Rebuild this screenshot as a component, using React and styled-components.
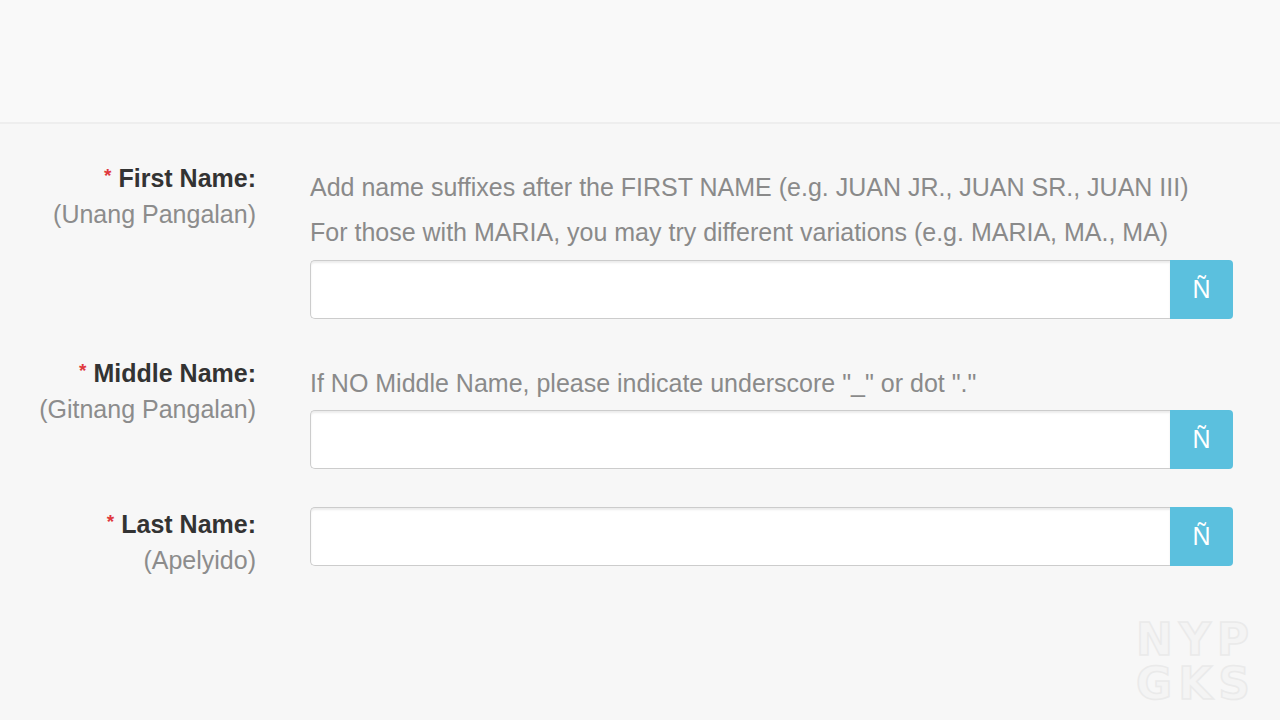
import React from "react";
import styled, { createGlobalStyle } from "styled-components";

const Global = createGlobalStyle`
  html, body { margin: 0; padding: 0; }
  body {
    background: #f7f7f7;
    font-family: "Liberation Sans", Arial, sans-serif;
    width: 1280px;
    height: 720px;
    overflow: hidden;
  }
`;

const Page = styled.div`
  position: relative;
  width: 1280px;
  height: 720px;
  background: #f7f7f7;
`;

const TopBar = styled.div`
  height: 122px;
  background: #f9f9f9;
  border-bottom: 2px solid #eeeeee;
`;

const Form = styled.div`
  display: flex;
  flex-direction: column;
  padding-top: 34px;
`;

const Row = styled.div`
  display: grid;
  grid-template-columns: 256px 923px;
  column-gap: 54px;
  margin-bottom: ${(p) => p.$gap || 0}px;
`;

const LabelCol = styled.div`
  text-align: right;
  line-height: 36px;
  font-size: 25px;
`;

const Star = styled.span`
  color: #e0393e;
  font-size: 19px;
  vertical-align: 5px;
  margin-right: 7px;
`;

const LabelMain = styled.div`
  color: #333;
  font-weight: bold;
`;

const LabelSub = styled.div`
  color: #8c8c8c;
`;

const FieldCol = styled.div`
  display: flex;
  flex-direction: column;
  padding-top: ${(p) => p.$top || 0}px;
`;

const Help = styled.div`
  color: #8a8a8a;
  font-size: 25px;
  line-height: 45px;
  white-space: nowrap;
`;

const InputGroup = styled.div`
  display: flex;
  height: 59px;
  margin-top: ${(p) => p.$top || 0}px;
`;

const TextInput = styled.input`
  flex: 1;
  box-sizing: border-box;
  height: 100%;
  border: 1px solid #cccccc;
  border-right: none;
  border-radius: 5px 0 0 5px;
  background: #fff;
  box-shadow: inset 0 2px 2px rgba(0, 0, 0, 0.075);
  outline: none;
  font-family: inherit;
  font-size: 25px;
  padding: 0 18px;
`;

const EnyeButton = styled.button`
  width: 63px;
  height: 100%;
  border: none;
  border-radius: 0 4px 4px 0;
  background: #5bc0de;
  color: #fff;
  font-family: "Liberation Sans", Arial, sans-serif;
  font-size: 25px;
  padding: 0;
`;

const Watermark = styled.div`
  position: absolute;
  right: 24px;
  bottom: 14px;
  white-space: pre-line;
  font-family: "DejaVu Sans", sans-serif;
  font-weight: bold;
  font-size: 44px;
  line-height: 44px;
  letter-spacing: 6px;
  color: #f4f4f4;
  -webkit-text-stroke: 1.5px #eaeaea;
`;

function Field({ helps, label, sub, fieldTop, inputTop, gap }) {
  return (
    <Row $gap={gap}>
      <LabelCol>
        <LabelMain>
          <Star>*</Star>
          {label}
        </LabelMain>
        <LabelSub>{sub}</LabelSub>
      </LabelCol>
      <FieldCol $top={fieldTop}>
        {helps.map((h) => (
          <Help key={h}>{h}</Help>
        ))}
        <InputGroup $top={inputTop}>
          <TextInput type="text" />
          <EnyeButton type="button">Ñ</EnyeButton>
        </InputGroup>
      </FieldCol>
    </Row>
  );
}

export default function App() {
  return (
    <Page>
      <Global />
      <TopBar />
      <Form>
        <Field
          label="First Name:"
          sub="(Unang Pangalan)"
          helps={[
            "Add name suffixes after the FIRST NAME (e.g. JUAN JR., JUAN SR., JUAN III)",
            "For those with MARIA, you may try different variations (e.g. MARIA, MA., MA)",
          ]}
          fieldTop={7}
          inputTop={5}
          gap={34}
        />
        <Field
          label="Middle Name:"
          sub="(Gitnang Pangalan)"
          helps={['If NO Middle Name, please indicate underscore "_" or dot "."']}
          fieldTop={8}
          inputTop={4}
          gap={35}
        />
        <Field label="Last Name:" sub="(Apelyido)" helps={[]} fieldTop={3} />
      </Form>
      <Watermark>{"NYP\nGKS"}</Watermark>
    </Page>
  );
}
